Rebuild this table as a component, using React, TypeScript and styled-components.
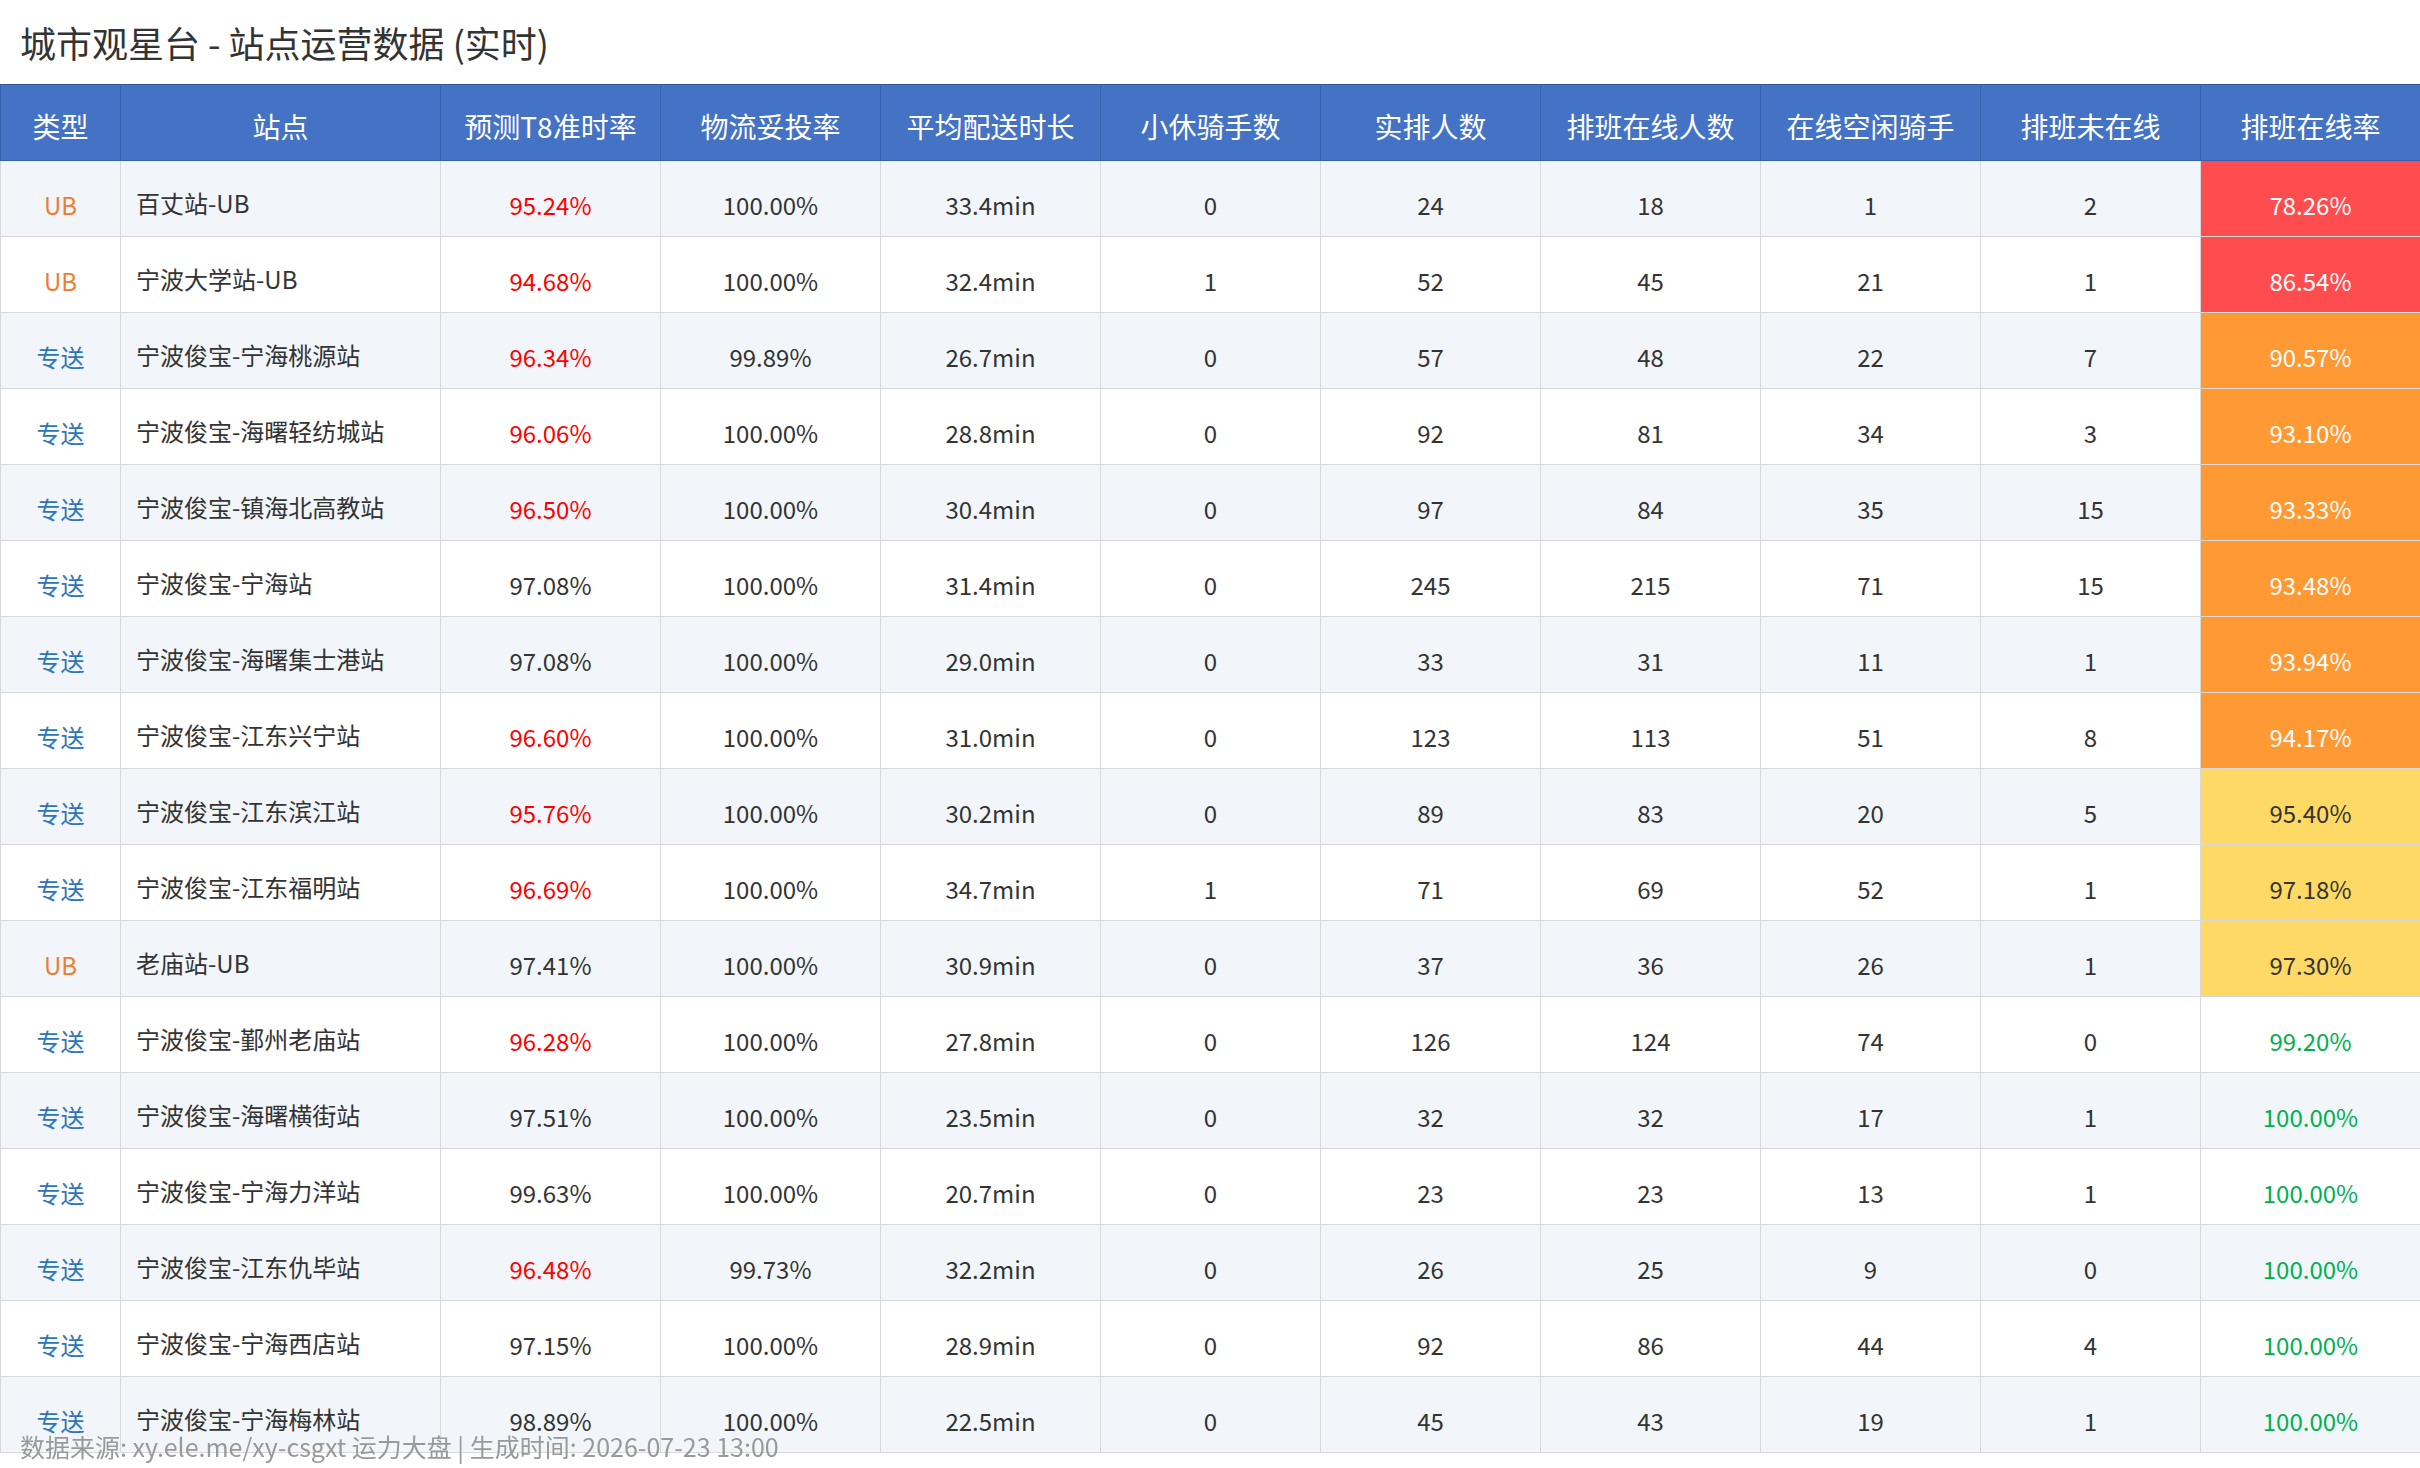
import React from 'react';
import styled, { createGlobalStyle } from 'styled-components';

const GlobalStyle = createGlobalStyle`
  html, body {
    margin: 0;
    padding: 0;
    background: #fff;
    font-family: "Noto Sans CJK SC", "Noto Sans", sans-serif;
    color: #333;
  }
`;

const Page = styled.div`
  width: 2420px;
`;

const Title = styled.h1`
  margin: 0;
  height: 84px;
  display: flex;
  align-items: center;
  padding: 0 20px;
  font-size: 36px;
  font-weight: normal;
  color: #333;
`;

const Table = styled.table`
  width: 100%;
  border-collapse: collapse;
  table-layout: fixed;
`;

const HeadCell = styled.th`
  height: 76px;
  padding: 6px 0 0;
  box-sizing: border-box;
  background: #4472c4;
  color: #fff;
  font-size: 28px;
  font-weight: normal;
  text-align: center;
  border: 1px solid #3761ad;
  border-top-color: #2f5597;
`;

const Row = styled.tr<{ $striped: boolean }>`
  height: 76px;
  background: ${(p) => (p.$striped ? '#f2f6fa' : '#fff')};
`;

const Cell = styled.td<{ $color?: string; $bg?: string; $left?: boolean }>`
  padding: ${(p) => (p.$left ? '8px 0 0 15px' : '12px 0 0')};
  box-sizing: border-box;
  font-size: 24px;
  text-align: ${(p) => (p.$left ? 'left' : 'center')};
  color: ${(p) => p.$color || '#333'};
  background: ${(p) => p.$bg || 'transparent'};
  border: 1px solid #d9d9d9;
  white-space: nowrap;
`;

const Footer = styled.div`
  position: fixed;
  left: 20px;
  bottom: 4px;
  font-size: 25px;
  color: #999;
`;

type Station = {
  type: 'UB' | '专送';
  name: string;
  t8: string;
  delivered: string;
  avg: string;
  rest: number;
  scheduled: number;
  online: number;
  idle: number;
  offline: number;
  rate: string;
};

const rows: Station[] = [
  { type: 'UB', name: '百丈站-UB', t8: '95.24%', delivered: '100.00%', avg: '33.4min', rest: 0, scheduled: 24, online: 18, idle: 1, offline: 2, rate: '78.26%' },
  { type: 'UB', name: '宁波大学站-UB', t8: '94.68%', delivered: '100.00%', avg: '32.4min', rest: 1, scheduled: 52, online: 45, idle: 21, offline: 1, rate: '86.54%' },
  { type: '专送', name: '宁波俊宝-宁海桃源站', t8: '96.34%', delivered: '99.89%', avg: '26.7min', rest: 0, scheduled: 57, online: 48, idle: 22, offline: 7, rate: '90.57%' },
  { type: '专送', name: '宁波俊宝-海曙轻纺城站', t8: '96.06%', delivered: '100.00%', avg: '28.8min', rest: 0, scheduled: 92, online: 81, idle: 34, offline: 3, rate: '93.10%' },
  { type: '专送', name: '宁波俊宝-镇海北高教站', t8: '96.50%', delivered: '100.00%', avg: '30.4min', rest: 0, scheduled: 97, online: 84, idle: 35, offline: 15, rate: '93.33%' },
  { type: '专送', name: '宁波俊宝-宁海站', t8: '97.08%', delivered: '100.00%', avg: '31.4min', rest: 0, scheduled: 245, online: 215, idle: 71, offline: 15, rate: '93.48%' },
  { type: '专送', name: '宁波俊宝-海曙集士港站', t8: '97.08%', delivered: '100.00%', avg: '29.0min', rest: 0, scheduled: 33, online: 31, idle: 11, offline: 1, rate: '93.94%' },
  { type: '专送', name: '宁波俊宝-江东兴宁站', t8: '96.60%', delivered: '100.00%', avg: '31.0min', rest: 0, scheduled: 123, online: 113, idle: 51, offline: 8, rate: '94.17%' },
  { type: '专送', name: '宁波俊宝-江东滨江站', t8: '95.76%', delivered: '100.00%', avg: '30.2min', rest: 0, scheduled: 89, online: 83, idle: 20, offline: 5, rate: '95.40%' },
  { type: '专送', name: '宁波俊宝-江东福明站', t8: '96.69%', delivered: '100.00%', avg: '34.7min', rest: 1, scheduled: 71, online: 69, idle: 52, offline: 1, rate: '97.18%' },
  { type: 'UB', name: '老庙站-UB', t8: '97.41%', delivered: '100.00%', avg: '30.9min', rest: 0, scheduled: 37, online: 36, idle: 26, offline: 1, rate: '97.30%' },
  { type: '专送', name: '宁波俊宝-鄞州老庙站', t8: '96.28%', delivered: '100.00%', avg: '27.8min', rest: 0, scheduled: 126, online: 124, idle: 74, offline: 0, rate: '99.20%' },
  { type: '专送', name: '宁波俊宝-海曙横街站', t8: '97.51%', delivered: '100.00%', avg: '23.5min', rest: 0, scheduled: 32, online: 32, idle: 17, offline: 1, rate: '100.00%' },
  { type: '专送', name: '宁波俊宝-宁海力洋站', t8: '99.63%', delivered: '100.00%', avg: '20.7min', rest: 0, scheduled: 23, online: 23, idle: 13, offline: 1, rate: '100.00%' },
  { type: '专送', name: '宁波俊宝-江东仇毕站', t8: '96.48%', delivered: '99.73%', avg: '32.2min', rest: 0, scheduled: 26, online: 25, idle: 9, offline: 0, rate: '100.00%' },
  { type: '专送', name: '宁波俊宝-宁海西店站', t8: '97.15%', delivered: '100.00%', avg: '28.9min', rest: 0, scheduled: 92, online: 86, idle: 44, offline: 4, rate: '100.00%' },
  { type: '专送', name: '宁波俊宝-宁海梅林站', t8: '98.89%', delivered: '100.00%', avg: '22.5min', rest: 0, scheduled: 45, online: 43, idle: 19, offline: 1, rate: '100.00%' },
];

const headers = ['类型', '站点', '预测T8准时率', '物流妥投率', '平均配送时长', '小休骑手数', '实排人数', '排班在线人数', '在线空闲骑手', '排班未在线', '排班在线率'];
const widths = [120, 320, 220, 220, 220, 220, 220, 220, 220, 220, 220];

const rateStyle = (rate: string): { bg?: string; color: string } => {
  const v = parseFloat(rate);
  if (v < 90) return { bg: '#ff4d4f', color: '#fff' };
  if (v < 95) return { bg: '#ff9933', color: '#fff' };
  if (v < 99) return { bg: '#ffd966', color: '#333' };
  return { color: '#00b050' };
};

const App = () => (
  <Page>
    <GlobalStyle />
    <Title>城市观星台 - 站点运营数据 (实时)</Title>
    <Table>
      <colgroup>
        {widths.map((w, i) => (
          <col key={i} style={{ width: w }} />
        ))}
      </colgroup>
      <thead>
        <tr>
          {headers.map((h) => (
            <HeadCell key={h}>{h}</HeadCell>
          ))}
        </tr>
      </thead>
      <tbody>
        {rows.map((r, i) => {
          const rs = rateStyle(r.rate);
          return (
            <Row key={r.name} $striped={i % 2 === 0}>
              <Cell $color={r.type === 'UB' ? '#ed7d31' : '#2e75b6'}>{r.type}</Cell>
              <Cell $left>{r.name}</Cell>
              <Cell $color={parseFloat(r.t8) < 97 ? '#ff0000' : '#333'}>{r.t8}</Cell>
              <Cell>{r.delivered}</Cell>
              <Cell>{r.avg}</Cell>
              <Cell>{r.rest}</Cell>
              <Cell>{r.scheduled}</Cell>
              <Cell>{r.online}</Cell>
              <Cell>{r.idle}</Cell>
              <Cell>{r.offline}</Cell>
              <Cell $bg={rs.bg} $color={rs.color}>{r.rate}</Cell>
            </Row>
          );
        })}
      </tbody>
    </Table>
    <Footer>数据来源: xy.ele.me/xy-csgxt 运力大盘 | 生成时间: 2026-07-23 13:00</Footer>
  </Page>
);

export default App;
